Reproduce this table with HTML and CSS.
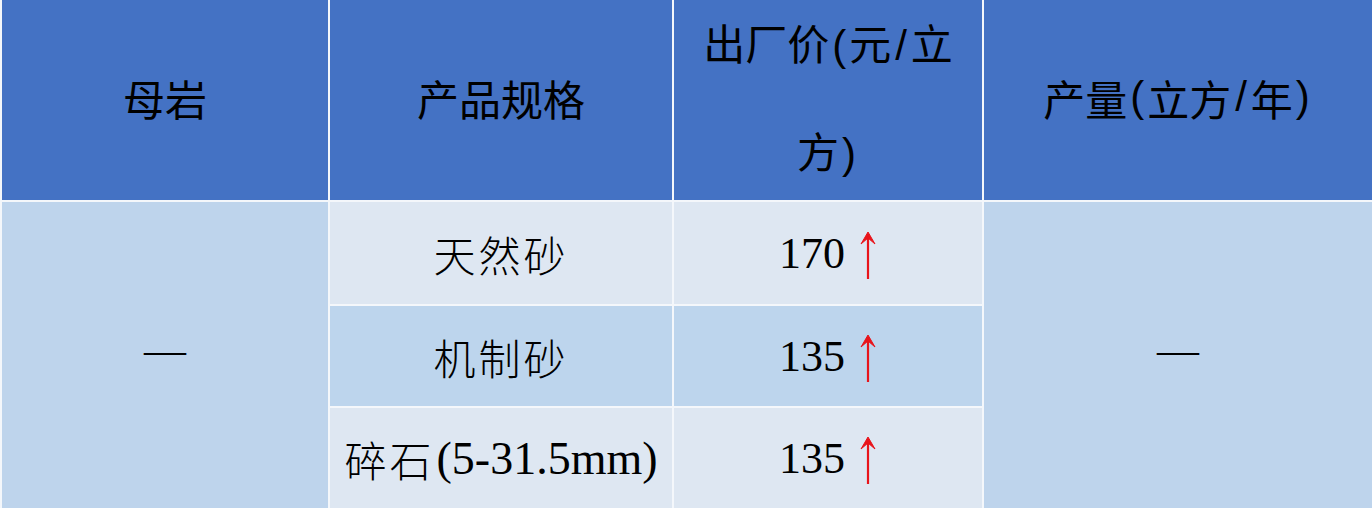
FILE: index.html
```html
<!DOCTYPE html>
<html lang="zh">
<head>
<meta charset="utf-8">
<link rel="stylesheet" href="styles.css">
</head>
<body>
<div class="table">
  <div class="cell head">母岩</div>
  <div class="cell head">产品规格</div>
  <div class="cell head wrap">
    <div class="line">出厂价<span class="p">(</span>元<span class="s">/</span>立</div>
    <div class="line">方<span class="p">)</span></div>
  </div>
  <div class="cell head">产量<span class="p">(</span>立方<span class="s">/</span>年<span class="p">)</span></div>

  <div class="cell merged c1">—</div>
  <div class="cell light spec">天然砂</div>
  <div class="cell light price">170<svg class="arrow" viewBox="0 0 18 50"><path d="M9 5 V50" /><path d="M2 15 L9 3 L16 15 L9 9 Z" class="head"/></svg></div>
  <div class="cell merged c4">—</div>

  <div class="cell dark spec">机制砂</div>
  <div class="cell dark price">135<svg class="arrow" viewBox="0 0 18 50"><path d="M9 5 V50" /><path d="M2 15 L9 3 L16 15 L9 9 Z" class="head"/></svg></div>

  <div class="cell light spec">碎石<span class="num">(5-31.5mm)</span></div>
  <div class="cell light price">135<svg class="arrow" viewBox="0 0 18 50"><path d="M9 5 V50" /><path d="M2 15 L9 3 L16 15 L9 9 Z" class="head"/></svg></div>
</div>
</body>
</html>
```

FILE: styles.css
```css
html, body {
  margin: 0;
  padding: 0;
  background: #ffffff;
}
.table {
  width: 1372px;
  height: 508px;
  box-sizing: border-box;
  padding-left: 2px;
  display: grid;
  grid-template-columns: 326px 342px 308px 1fr;
  grid-template-rows: 200px 102px 100px 100px;
  column-gap: 2px;
  row-gap: 2px;
  background: #f4f7fb;
  overflow: hidden;
}
.cell {
  display: flex;
  align-items: center;
  justify-content: center;
  color: #000;
  text-align: center;
}
.head {
  background: #4472c4;
  font-family: "Noto Sans CJK SC", "Liberation Sans", sans-serif;
  font-size: 42px;
  font-weight: 400;
  padding-bottom: 6px;
  box-sizing: border-box;
}
.head .p {
  font-family: "Liberation Sans", sans-serif;
  padding: 0 3px;
}
.head .s {
  font-family: "Liberation Sans", sans-serif;
  padding: 0 4px;
}
.wrap {
  flex-direction: column;
  padding: 0 0 4px;
}
.wrap .line {
  line-height: 104px;
  white-space: nowrap;
}
.merged {
  background: #bed4ec;
  grid-row: 2 / span 3;
  font-family: "Liberation Serif", serif;
  font-size: 42px;
  padding-bottom: 10px;
  box-sizing: border-box;
}
.c1 { grid-column: 1; }
.c4 { grid-column: 4; }
.light { background: #dee7f2; }
.dark { background: #bdd5ed; }
.spec {
  font-family: "Liberation Serif", "Noto Sans CJK SC", serif;
  font-weight: 300;
  font-size: 42px;
  letter-spacing: 3px;
}
.spec .num {
  letter-spacing: 0;
  font-weight: 400;
  font-size: 46px;
  margin-left: 2px;
}
.price {
  font-family: "Liberation Serif", serif;
  font-size: 44px;
  gap: 14px;
}
.arrow {
  width: 18px;
  height: 50px;
  margin-top: 2px;
}
.arrow path {
  stroke: #e8141b;
  stroke-width: 2.2;
  fill: none;
}
.arrow path.head {
  fill: #e8141b;
  stroke-width: 1;
  stroke-linejoin: round;
}
```
